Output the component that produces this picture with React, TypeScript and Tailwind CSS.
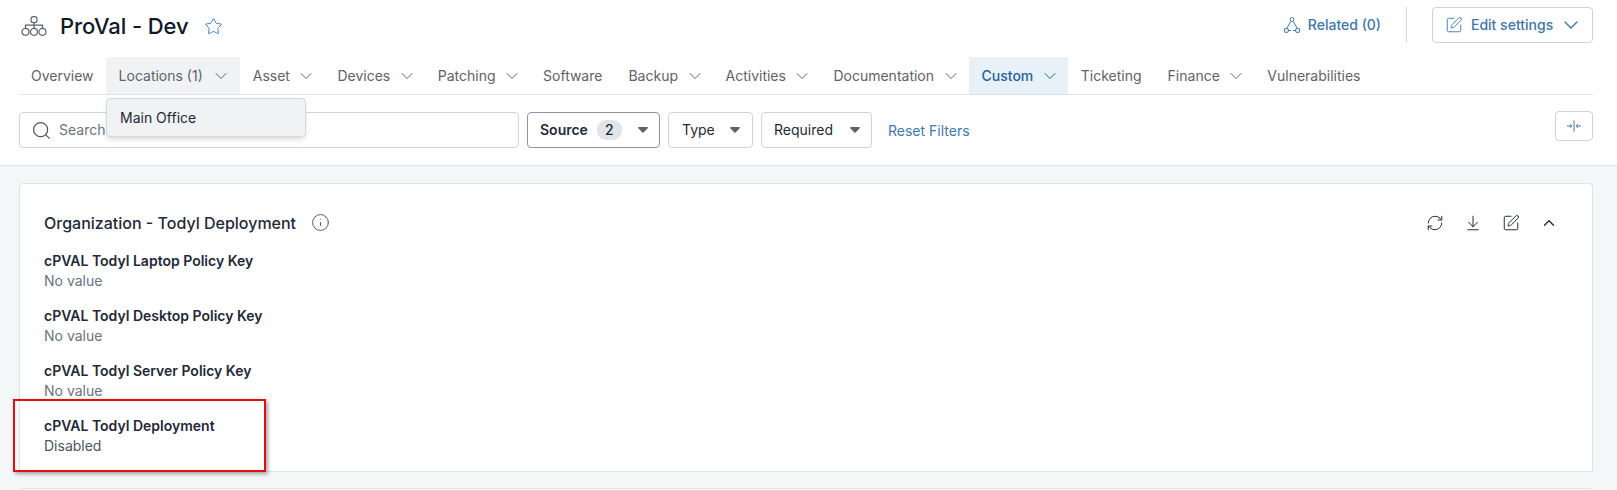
import { ArrowDownToLine, ChevronDown, ChevronUp, Info, RefreshCw, Search, SquarePen, Star } from "lucide-react";

const tabs = [
  { label: "Overview" },
  { label: "Locations (1)", menu: true, hover: true },
  { label: "Asset", menu: true },
  { label: "Devices", menu: true },
  { label: "Patching", menu: true },
  { label: "Software" },
  { label: "Backup", menu: true },
  { label: "Activities", menu: true },
  { label: "Documentation", menu: true },
  { label: "Custom", menu: true, active: true },
  { label: "Ticketing" },
  { label: "Finance", menu: true },
  { label: "Vulnerabilities" },
];

const fields = [
  { name: "cPVAL Todyl Laptop Policy Key", value: "No value" },
  { name: "cPVAL Todyl Desktop Policy Key", value: "No value" },
  { name: "cPVAL Todyl Server Policy Key", value: "No value" },
  { name: "cPVAL Todyl Deployment", value: "Disabled", dark: true },
];

function Caret() {
  return (
    <svg width="10" height="6" viewBox="0 0 10 6" className="fill-[#5f6368]">
      <path d="M0.9 0h8.2c.7 0 1.1.8.6 1.3L5.6 5.6c-.3.3-.9.3-1.2 0L.3 1.3C-.2.8.2 0 .9 0z" />
    </svg>
  );
}

function OrgIcon() {
  return (
    <svg width="26" height="20" viewBox="0 0 26 20" fill="none" stroke="#5f6368" strokeWidth="1.2">
      <rect x="10" y="0.6" width="6" height="6" rx="2.4" />
      <path d="M13 6.6v5.6M4.5 12.2V9.2h17v3" />
      <circle cx="4.5" cy="15.8" r="3.5" />
      <circle cx="13" cy="15.8" r="3.5" />
      <circle cx="21.5" cy="15.8" r="3.5" />
    </svg>
  );
}

function RelatedIcon() {
  return (
    <svg width="16" height="16" viewBox="0 0 16 16" fill="none" stroke="#3f76a8" strokeWidth="1">
      <rect x="6.2" y="0.5" width="3.6" height="4" rx="1.6" />
      <path d="M6.800 4.500 2.600 11.500M9.200 4.500l4.200 7M4.200 13.500h3M9 13.500h2.800" />
      <rect x="0.5" y="11.6" width="3.7" height="3.7" rx="0.5" />
      <rect x="11.8" y="11.6" width="3.7" height="3.7" rx="0.5" />
    </svg>
  );
}

function CollapseIcon() {
  return (
    <svg width="14" height="12" viewBox="0 0 14 12" fill="none" stroke="#3f76a8" strokeWidth="1">
      <path d="M7 0.500v11M0 6h4.500M3 4.200 4.800 6 3 7.800M14 6H9.500M11 4.200 9.200 6 11 7.800" />
    </svg>
  );
}

export default function App() {
  return (
    <div className="relative h-[490px] w-[1617px] overflow-hidden bg-[#f3f7f8] font-['Inter',sans-serif]">
      <header className="border-b border-[#dfe3e6] bg-white pl-[19px] pr-[24px]">
        <div className="flex h-[50px] items-center justify-between">
          <div className="flex items-center pt-[2px]">
            <span className="ml-[2px] block"><OrgIcon /></span>
            <h1 className="ml-[13px] text-[22px] font-medium leading-none tracking-[-0.1px] text-[#111827]">ProVal - Dev</h1>
            <Star className="ml-[16px] size-[19px] text-[#3f82c0]" strokeWidth={1.2} />
          </div>
          <div className="flex items-center">
            <span className="flex items-center gap-[8px] text-sm font-medium text-[#3f76a8]">
              <RelatedIcon />
              Related (0)
            </span>
            <div className="mx-[25px] h-[36px] w-px bg-[#d5d9dd]" />
            <button className="flex h-[36px] w-[161px] items-center rounded border border-[#cfd4d9] pl-[12px] text-sm font-medium text-[#3f76a8]">
              <SquarePen className="size-[18px]" strokeWidth={1.2} />
              <span className="ml-[8px]">Edit settings</span>
              <ChevronDown className="ml-[6px] size-[24px]" strokeWidth={1.4} />
            </button>
          </div>
        </div>

        <nav className="relative mt-[7px] h-[38px] border-b border-[#dfe3e6]">
          <div className="-ml-px flex h-[37px] items-stretch">
            {tabs.map((tab) => (
              <div
                key={tab.label}
                className={
                  "flex items-center pl-[13px] text-sm " +
                  (tab.hover ? "-ml-px gap-[8px] pr-[9px] " : tab.menu ? "gap-[6.5px] pr-[8px] " : "pr-[13px] ") +
                  (tab.active
                    ? "bg-[#e9f1f8] font-medium text-[#23639c]"
                    : tab.hover
                      ? "bg-[#f0f2f4] text-[#5f6368]"
                      : "text-[#5f6368]")
                }
              >
                {tab.label}
                {tab.menu && <ChevronDown className="size-[20px]" strokeWidth={1.2} />}
              </div>
            ))}
          </div>
          <div className="absolute left-[87px] top-[41px] z-10 flex h-[39px] w-[200px] items-center rounded-sm border border-[#d5d9dd] bg-[#f0f2f4] pl-[13px] text-sm text-[#1f2937] shadow-md">
            Main Office
          </div>
        </nav>

        <div className="flex h-[70px] items-start pt-[17px]">
          <div className="flex h-[36px] w-[500px] items-center rounded border border-[#cfd4d9] pl-[11px] text-sm text-[#6b7280]">
            <Search className="mr-[7px] size-[21px] text-[#4b5563]" strokeWidth={1.4} />
            Search
          </div>
          <button className="ml-[8px] flex h-[36px] w-[133px] items-center rounded border border-[#8f959b] pl-[12px] text-sm font-semibold text-[#1f2937]">
            Source
            <span className="ml-[9px] flex h-[20px] w-[25px] items-center justify-center rounded-[9px] bg-[#e1e5e9] text-sm font-medium">2</span>
            <span className="ml-[16px] block"><Caret /></span>
          </button>
          <button className="ml-[8px] flex h-[36px] w-[85px] items-center justify-between rounded border border-[#cfd4d9] pl-[13px] pr-[12px] text-sm text-[#1f2937]">
            Type
            <Caret />
          </button>
          <button className="ml-[8px] flex h-[36px] w-[111px] items-center justify-between rounded border border-[#cfd4d9] pl-[12px] pr-[11px] text-sm text-[#1f2937]">
            Required
            <Caret />
          </button>
          <span className="ml-[16px] mt-[9px] text-sm text-[#4279ab]">Reset Filters</span>
          <button className="-mt-px ml-auto flex h-[30px] w-[38px] items-center justify-center rounded border border-[#cfd4d9]">
            <CollapseIcon />
          </button>
        </div>
      </header>

      <main className="pl-[19px] pr-[24px] pt-[17px]">
        <section className="h-[289px] rounded-t border border-[#dfe3e6] bg-white px-[24px]">
          <div className="flex h-[67px] items-center justify-between pt-[10px]">
            <div className="flex items-center gap-[15px]">
              <h2 className="text-base font-medium text-[#1f2937]">Organization - Todyl Deployment</h2>
              <Info className="size-[19px] text-[#4b5563]" strokeWidth={1.2} />
            </div>
            <div className="mr-[10px] flex items-center gap-[20px] text-[#1f2937]">
              <RefreshCw className="size-[18px]" strokeWidth={1.3} />
              <ArrowDownToLine className="size-[18px]" strokeWidth={1.3} />
              <SquarePen className="size-[18px]" strokeWidth={1.3} />
              <ChevronUp className="size-[18px]" strokeWidth={1.7} />
            </div>
          </div>
          <div className="flex flex-col gap-[15px]">
            {fields.map((f) => (
              <div key={f.name}>
                <div className="text-sm font-semibold leading-[20px] text-[#1f2937]">{f.name}</div>
                <div className={"text-sm leading-[20px] " + (f.dark ? "text-[#4b5563]" : "text-[#6b7280]")}>{f.value}</div>
              </div>
            ))}
          </div>
        </section>
        <section className="mt-[16px] h-[20px] rounded-t border border-[#dfe3e6] bg-white" />
      </main>

      {/* red callout drawn over the screenshot */}
      <div className="absolute left-[13px] top-[399px] h-[73px] w-[253px] border-2 border-[#e01010] shadow-[2px_2px_4px_rgba(0,0,0,0.35)]" />
    </div>
  );
}
